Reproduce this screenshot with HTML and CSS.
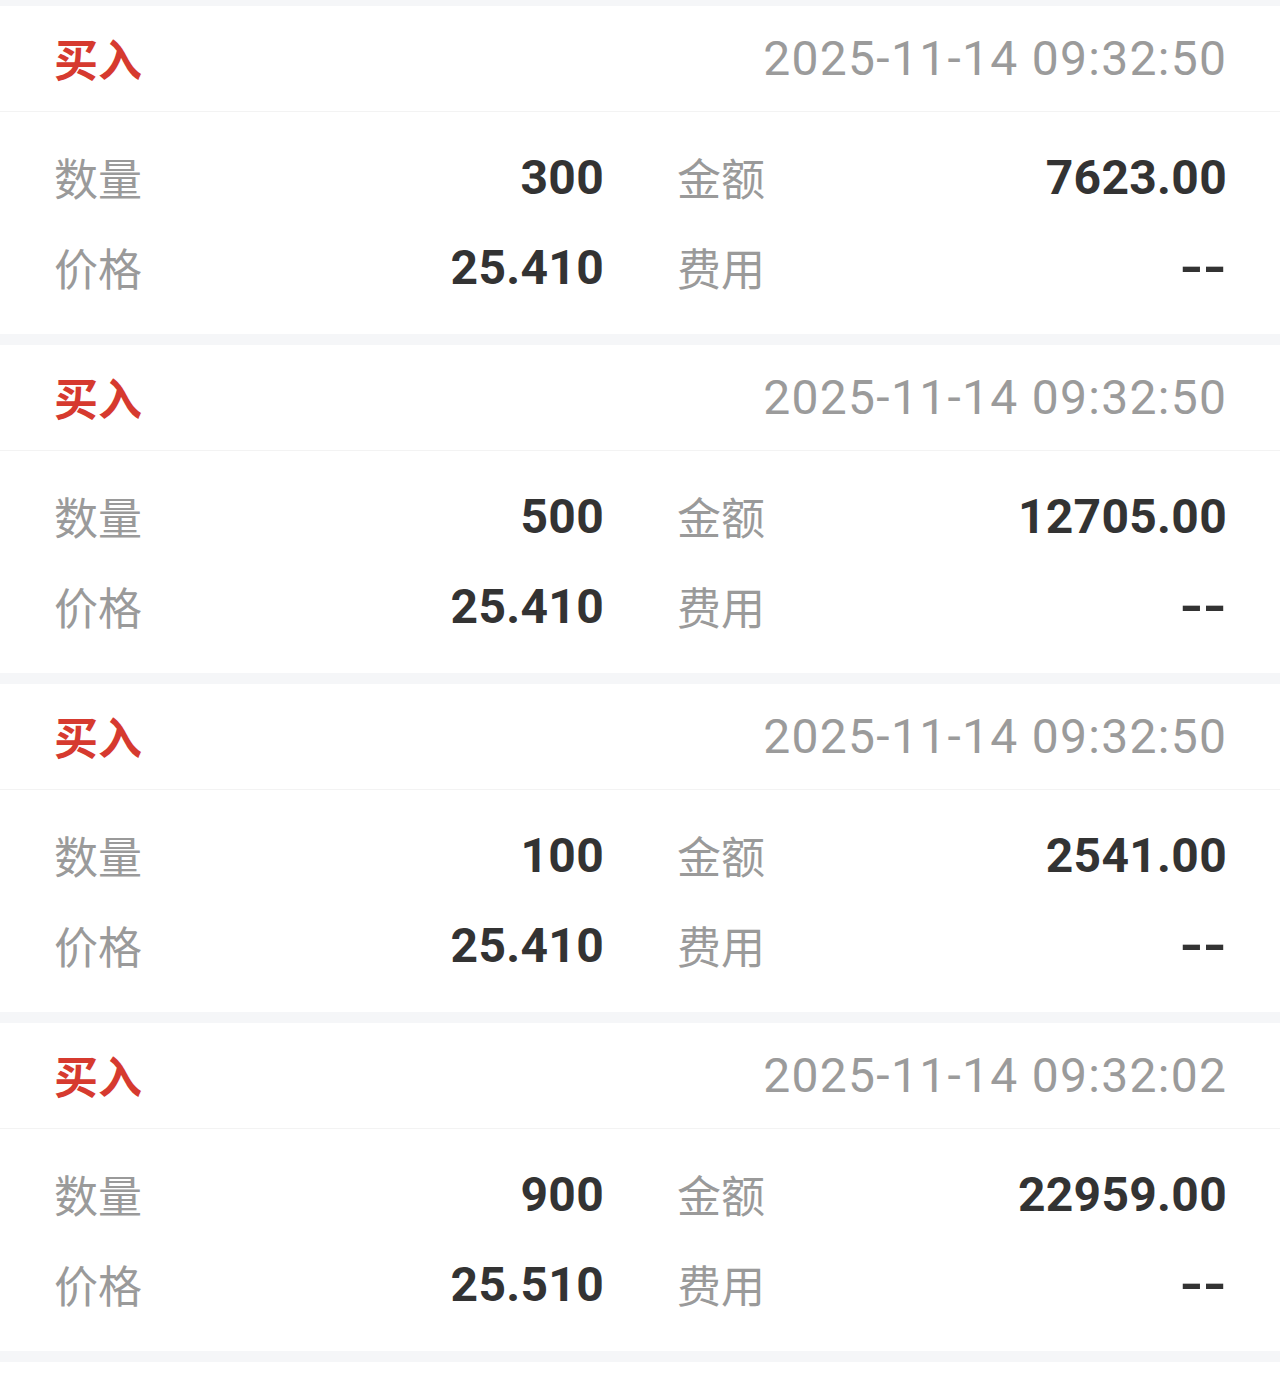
FILE: index.html
```html
<!DOCTYPE html>
<html lang="zh-CN">
<head>
<meta charset="utf-8">
<link rel="stylesheet" href="styles.css">
</head>
<body>
<div class="list">
  <div class="card">
    <div class="head"><span class="side">买入</span><span class="time">2025-11-14 09:32:50</span></div>
    <div class="body">
      <div class="cell"><span class="label">数量</span><span class="val">300</span></div>
      <div class="cell"><span class="label">金额</span><span class="val">7623.00</span></div>
      <div class="cell"><span class="label">价格</span><span class="val">25.410</span></div>
      <div class="cell"><span class="label">费用</span><span class="val dash">--</span></div>
    </div>
  </div>
  <div class="card">
    <div class="head"><span class="side">买入</span><span class="time">2025-11-14 09:32:50</span></div>
    <div class="body">
      <div class="cell"><span class="label">数量</span><span class="val">500</span></div>
      <div class="cell"><span class="label">金额</span><span class="val">12705.00</span></div>
      <div class="cell"><span class="label">价格</span><span class="val">25.410</span></div>
      <div class="cell"><span class="label">费用</span><span class="val dash">--</span></div>
    </div>
  </div>
  <div class="card">
    <div class="head"><span class="side">买入</span><span class="time">2025-11-14 09:32:50</span></div>
    <div class="body">
      <div class="cell"><span class="label">数量</span><span class="val">100</span></div>
      <div class="cell"><span class="label">金额</span><span class="val">2541.00</span></div>
      <div class="cell"><span class="label">价格</span><span class="val">25.410</span></div>
      <div class="cell"><span class="label">费用</span><span class="val dash">--</span></div>
    </div>
  </div>
  <div class="card">
    <div class="head"><span class="side">买入</span><span class="time">2025-11-14 09:32:02</span></div>
    <div class="body">
      <div class="cell"><span class="label">数量</span><span class="val">900</span></div>
      <div class="cell"><span class="label">金额</span><span class="val">22959.00</span></div>
      <div class="cell"><span class="label">价格</span><span class="val">25.510</span></div>
      <div class="cell"><span class="label">费用</span><span class="val dash">--</span></div>
    </div>
  </div>
</div>
</body>
</html>
```
FILE: styles.css
```css
html, body {
  margin: 0;
  padding: 0;
  background: #ffffff;
}
body {
  font-family: Roboto, "Noto Sans CJK SC", sans-serif;
  font-size: 48px;
}
.list {
  background: #f5f6f8;
  padding-top: 6px;
  padding-bottom: 11px;
  display: flex;
  flex-direction: column;
  gap: 11px;
}
.card {
  background: #ffffff;
}
.head {
  height: 106px;
  box-sizing: border-box;
  display: flex;
  align-items: center;
  justify-content: space-between;
  padding: 0 54px 0 54px;
  border-bottom: 1px solid #f3f3f3;
}
.side {
  color: #d63a2f;
  font-weight: 700;
  font-family: "Noto Sans CJK SC", sans-serif;
  font-size: 44px;
  line-height: 1;
  position: relative;
  top: -1px;
}
.time {
  color: #9b9b9b;
  font-size: 48px;
  line-height: 1;
  letter-spacing: 1.3px;
  margin-right: -1.3px;
}
.body {
  display: grid;
  grid-template-columns: 1fr 1fr;
  column-gap: 74px;
  padding: 21px 54px 21px 54px;
}
.cell {
  height: 90px;
  display: flex;
  align-items: center;
  justify-content: space-between;
}
.label {
  color: #9a9a9a;
  font-family: "Noto Sans CJK SC", sans-serif;
  font-size: 44px;
  line-height: 1;
  position: relative;
  top: -1px;
}
.val {
  color: #333333;
  font-weight: 700;
  line-height: 1;
  letter-spacing: 0.3px;
  margin-right: -1px;
}
.dash {
  display: inline-block;
  transform: scaleX(1.3);
  transform-origin: right center;
  letter-spacing: -1px;
  margin-right: 0;
}
```
